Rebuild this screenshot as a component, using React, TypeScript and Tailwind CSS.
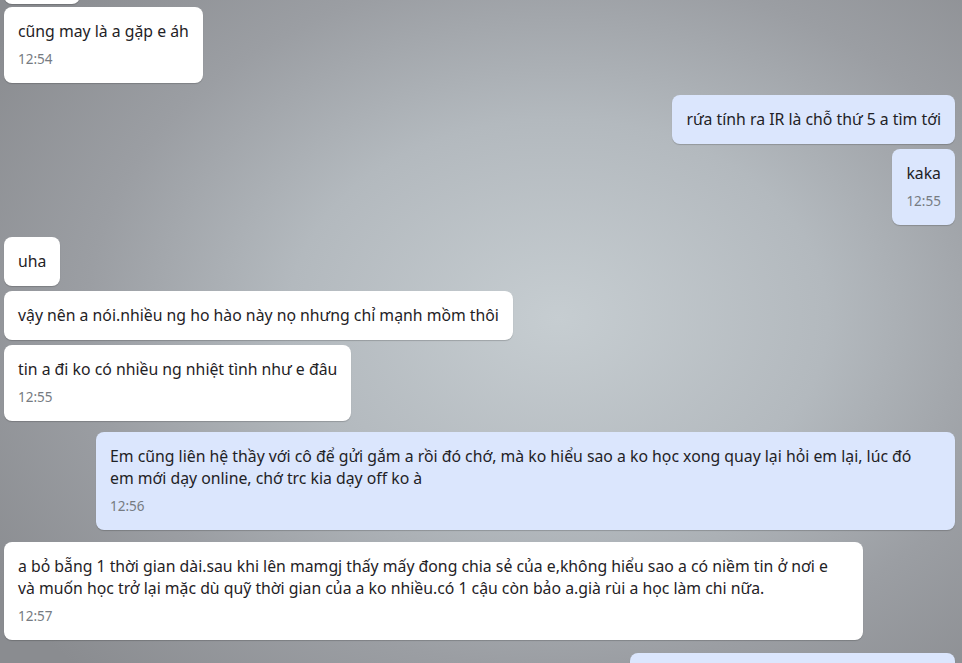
import type { ReactNode } from "react";

type Msg = {
  me?: boolean;
  lines: string[];
  time?: string;
  gapTop: number; // 5 = same sender, 12 = new group
  wide?: boolean; // wrapped message, fills the max width
};

const messages: Msg[] = [
  { lines: ["cũng may là a gặp e áh"], time: "12:54", gapTop: 3 },
  { me: true, lines: ["rứa tính ra IR là chỗ thứ 5 a tìm tới"], gapTop: 12 },
  { me: true, lines: ["kaka"], time: "12:55", gapTop: 5 },
  { lines: ["uha"], gapTop: 12 },
  { lines: ["vậy nên a nói.nhiều ng ho hào này nọ nhưng chỉ mạnh mồm thôi"], gapTop: 5 },
  { lines: ["tin a đi ko có nhiều ng nhiệt tình như e đâu"], time: "12:55", gapTop: 5 },
  {
    me: true,
    wide: true,
    lines: [
      "Em cũng liên hệ thầy với cô để gửi gắm a rồi đó chớ, mà ko hiểu sao a ko học xong quay lại hỏi em lại, lúc đó",
      "em mới dạy online, chớ trc kia dạy off ko à",
    ],
    time: "12:56",
    gapTop: 11,
  },
  {
    wide: true,
    lines: [
      "a bỏ bẵng 1 thời gian dài.sau khi lên mamgj thấy mấy đong chia sẻ của e,không hiểu sao a có niềm tin ở nơi e",
      "và muốn học trở lại mặc dù quỹ thời gian của a ko nhiều.có 1 cậu còn bảo a.già rùi a học làm chi nữa.",
    ],
    time: "12:57",
    gapTop: 12,
  },
];

function Bubble({ me, wide, children }: { me?: boolean; wide?: boolean; children: ReactNode }) {
  return (
    <div
      className={`max-w-[860px] rounded-lg px-[14px] pt-[13px] pb-[14px] shadow-[0_1px_1px_rgba(0,0,0,0.18)] ${
        me ? "self-end bg-[#dbe6fd]" : "self-start bg-white"
      } ${wide ? "w-[859px]" : ""}`}
    >
      {children}
    </div>
  );
}

export default function App() {
  return (
    <div
      className="h-[663px] w-[962px] overflow-hidden bg-[radial-gradient(ellipse_70%_75%_at_58%_48%,#c6cdd1_0%,#b3b9be_40%,#9b9ea3_70%,#8a8c90_100%)]"
      style={{ fontFamily: '"Noto Sans", "Open Sans", sans-serif' }}
    >
      <div className="flex flex-col pl-1 pr-[7px]">
        {/* tail of the previous bubble, scrolled away */}
        <div className="-mt-[45px] h-[49px] w-[76px] self-start rounded-lg bg-white shadow-[0_1px_1px_rgba(0,0,0,0.18)]" />

        {messages.map((m, i) => (
          <div key={i} className="flex flex-col" style={{ marginTop: m.gapTop }}>
            <Bubble me={m.me} wide={m.wide}>
              <div className="text-[15.8px] leading-[22px] text-[#1f2226]">
                {m.lines.map((l, j) => (
                  <div key={j} className="whitespace-nowrap">
                    {l}
                  </div>
                ))}
              </div>
              {m.time && (
                <div className="mt-[7px] text-[13.5px] leading-[20px] text-[#767b82]">{m.time}</div>
              )}
            </Bubble>
          </div>
        ))}

        {/* next bubble, cut off at the bottom */}
        <div className="mt-[13px] h-[49px] w-[325px] self-end rounded-lg bg-[#dbe6fd] shadow-[0_1px_1px_rgba(0,0,0,0.18)]" />
      </div>
    </div>
  );
}
